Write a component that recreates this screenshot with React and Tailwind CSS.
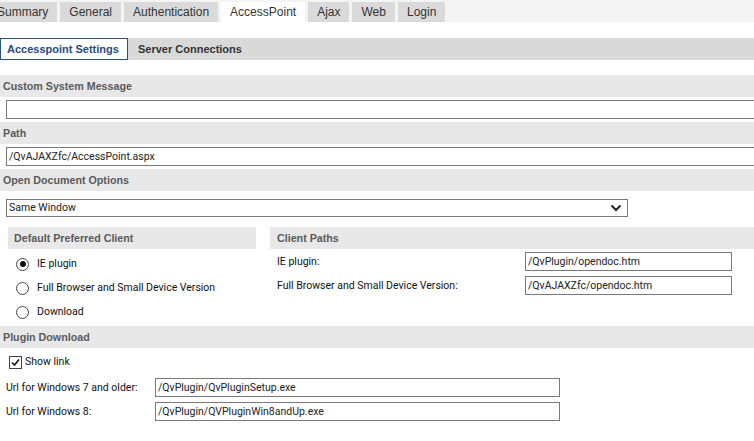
import React from 'react';

const tabs = ['Summary', 'General', 'Authentication', 'AccessPoint', 'Ajax', 'Web', 'Login'];

function Header({ children, className = '' }) {
  return (
    <div className={`h-[22px] bg-[#e8e8e8] flex items-center text-[10.7px] font-bold text-[#5a5a5a] font-['Liberation_Sans',sans-serif] ${className}`}>
      {children}
    </div>
  );
}

function TextBox({ value = '', className = '' }) {
  return (
    <div className={`h-[19px] border border-[#7a7a7a] bg-white flex items-center px-[2px] text-[10.5px] text-[#222] whitespace-nowrap overflow-hidden ${className}`}>
      {value}
    </div>
  );
}

function Radio({ checked, label }) {
  return (
    <div className="flex items-center h-[24px] pl-[8px]">
      <span className="w-[13px] h-[13px] rounded-full border border-[#444] bg-white flex items-center justify-center">
        {checked && <span className="w-[6px] h-[6px] rounded-full bg-[#111]" />}
      </span>
      <span className="ml-[8px] text-[10.5px] text-[#111]">{label}</span>
    </div>
  );
}

export default function App() {
  return (
    <div className="w-[754px] h-[441px] overflow-hidden bg-white font-['Roboto',sans-serif]">
      {/* top tabs */}
      <div className="h-[22px] bg-[#f4f4f4] flex items-end gap-[3px] -ml-[12px] font-['Liberation_Sans',sans-serif]">
        {tabs.map((t) => (
          <div
            key={t}
            className={`h-[20px] px-[9px] flex items-center text-[12px] text-[#333] ${
              t === 'AccessPoint' ? 'bg-white' : 'bg-[#dadada]'
            }`}
          >
            {t}
          </div>
        ))}
      </div>

      {/* sub tabs */}
      <div className="mt-[16px] h-[22px] flex font-['Liberation_Sans',sans-serif] text-[11px] font-bold">
        <div className="w-[128px] border border-[#2f4f80] bg-white text-[#284a7e] flex items-center pl-[6px]">
          Accesspoint Settings
        </div>
        <div className="flex-1 bg-[#d9d9d9] text-[#333] flex items-center pl-[10px]">Server Connections</div>
      </div>

      <Header className="mt-[15px] pl-[3px]">Custom System Message</Header>
      <TextBox className="mt-[3px] ml-[6px] w-[760px]" />

      <Header className="mt-[3px] pl-[3px]">Path</Header>
      <TextBox value="/QvAJAXZfc/AccessPoint.aspx" className="mt-[3px] ml-[6px] w-[760px]" />

      <Header className="mt-[3px] pl-[3px]">Open Document Options</Header>
      <div className="mt-[8px] ml-[6px] w-[622px] h-[18px] border border-[#7a7a7a] flex items-center justify-between px-[2px] text-[10.5px] text-[#222]">
        <span>Same Window</span>
        <svg width="12" height="8" viewBox="0 0 12 8" className="mr-[3px]">
          <path d="M1.5 1.5 L6 6 L10.5 1.5" fill="none" stroke="#222" strokeWidth="2" />
        </svg>
      </div>

      {/* two columns */}
      <div className="mt-[10px] flex">
        <div className="ml-[8px] w-[248px]">
          <Header className="pl-[6px]">Default Preferred Client</Header>
          <div className="mt-[3px]">
            <Radio checked label="IE plugin" />
            <Radio label="Full Browser and Small Device Version" />
            <Radio label="Download" />
          </div>
        </div>
        <div className="ml-[14px] flex-1">
          <Header className="pl-[7px]">Client Paths</Header>
          <div className="mt-[3px] flex items-center h-[19px]">
            <span className="w-[255px] pl-[7px] text-[10.5px] text-[#111]">IE plugin:</span>
            <TextBox value="/QvPlugin/opendoc.htm" className="w-[207px]" />
          </div>
          <div className="mt-[5px] flex items-center h-[19px]">
            <span className="w-[255px] pl-[7px] text-[10.5px] text-[#111]">Full Browser and Small Device Version:</span>
            <TextBox value="/QvAJAXZfc/opendoc.htm" className="w-[207px]" />
          </div>
        </div>
      </div>

      <Header className="mt-[2px] pl-[3px]">Plugin Download</Header>
      <div className="mt-[7px] ml-[9px] flex items-center h-[14px]">
        <span className="w-[13px] h-[13px] border border-[#444] bg-white flex items-center justify-center">
          <svg width="9" height="9" viewBox="0 0 9 9">
            <path d="M1 4.5 L3.5 7 L8 1.5" fill="none" stroke="#111" strokeWidth="1.6" />
          </svg>
        </span>
        <span className="ml-[3px] text-[10.5px] text-[#111]">Show link</span>
      </div>
      <div className="mt-[9px] flex items-center h-[19px]">
        <span className="w-[155px] pl-[6px] text-[10.5px] text-[#111]">Url for Windows 7 and older:</span>
        <TextBox value="/QvPlugin/QvPluginSetup.exe" className="w-[405px]" />
      </div>
      <div className="mt-[5px] flex items-center h-[19px]">
        <span className="w-[155px] pl-[6px] text-[10.5px] text-[#111]">Url for Windows 8:</span>
        <TextBox value="/QvPlugin/QVPluginWin8andUp.exe" className="w-[405px]" />
      </div>
    </div>
  );
}
